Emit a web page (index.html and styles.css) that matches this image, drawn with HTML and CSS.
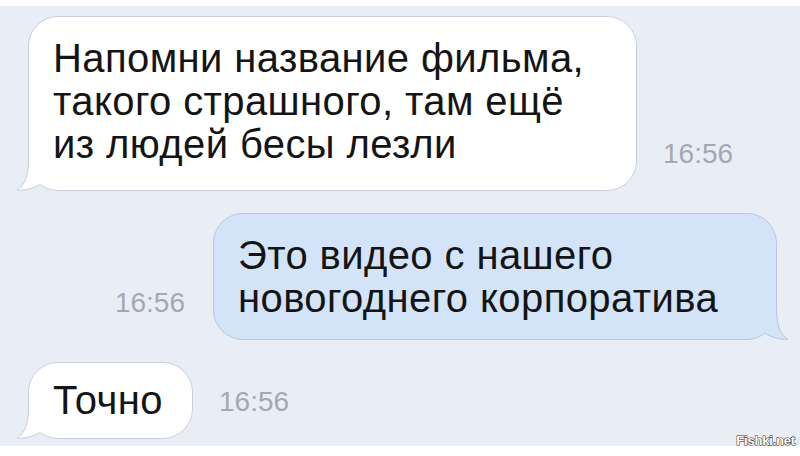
FILE: index.html
```html
<!DOCTYPE html>
<html lang="ru">
<head>
    <meta charset="UTF-8">
    <meta name="viewport" content="width=device-width, initial-scale=1.0">
    <title>Переписка</title>
    <link rel="stylesheet" href="styles.css">
</head>
<body>
    <div class="chat">
        <div class="row">
            <div class="bubble bubble-in bubble-wide">
                Напомни название фильма,<br>такого страшного, там ещё<br>из людей бесы лезли
                <svg class="tail tail-left" width="44" height="35" viewBox="0 0 44 35">
                    <path class="tail-fill" d="M12.5 3 C12.5 20 9 29 1 34.2 C9 34.8 17 32.5 24 28.4 Z"/>
                    <path class="tail-line" d="M12.5 3 C12.5 20 9 29 1 34.2 C9 34.8 17 32.5 24 28.4"/>
                </svg>
            </div>
            <span class="time">16:56</span>
        </div>
        <div class="row row-out">
            <span class="time">16:56</span>
            <div class="bubble bubble-out bubble-mid">
                Это видео с нашего<br>новогоднего корпоратива
                <svg class="tail tail-right" width="44" height="35" viewBox="0 0 44 35">
                    <path class="tail-fill" d="M12.5 3 C12.5 20 9 29 1 34.2 C9 34.8 17 32.5 24 28.4 Z"/>
                    <path class="tail-line" d="M12.5 3 C12.5 20 9 29 1 34.2 C9 34.8 17 32.5 24 28.4"/>
                </svg>
            </div>
        </div>
        <div class="row">
            <div class="bubble bubble-in bubble-short">
                Точно
                <svg class="tail tail-left" width="44" height="35" viewBox="0 0 44 35">
                    <path class="tail-fill" d="M12.5 3 C12.5 20 9 29 1 34.2 C9 34.8 17 32.5 24 28.4 Z"/>
                    <path class="tail-line" d="M12.5 3 C12.5 20 9 29 1 34.2 C9 34.8 17 32.5 24 28.4"/>
                </svg>
            </div>
            <span class="time">16:56</span>
        </div>
        <div class="watermark">Fishki.net</div>
    </div>
</body>
</html>
```

FILE: styles.css
```css
/* Page */
body {
    margin: 0;
    background-color: #ffffff;
    font-family: "Liberation Sans", Arial, sans-serif;
    overflow: hidden;
}
/* Chat area */
.chat {
    position: relative;
    box-sizing: border-box;
    height: 440px;
    margin-top: 6px;
    padding: 10px 23px 0 28px;
    background-color: #e9eef6;
    display: flex;
    flex-direction: column;
    gap: 22px;
}
/* One message with its time */
.row {
    display: flex;
    align-items: flex-end;
    gap: 26px;
}
.row-out {
    justify-content: flex-end;
    gap: 28px;
}
/* Message bubbles */
.bubble {
    position: relative;
    box-sizing: border-box;
    padding: 20px 20px 24px 24px;
    border-radius: 30px;
    font-size: 40px;
    line-height: 43px;
    letter-spacing: 0.4px;
    color: #141414;
}
.bubble-in {
    background-color: #ffffff;
    border: 1px solid #c9d0da;
}
.bubble-out {
    background-color: #d3e4f9;
    border: 1px solid #b8c8dc;
}
.bubble-wide {
    width: 609px;
}
.bubble-mid {
    width: 564px;
    padding-top: 20px;
    padding-bottom: 19px;
}
.bubble-short {
    width: 165px;
    padding-top: 16px;
    padding-bottom: 16px;
}
/* Bubble tails */
.tail {
    position: absolute;
    bottom: -1px;
    overflow: visible;
}
.tail-left {
    left: -13px;
}
.tail-right {
    right: -13px;
    transform: scaleX(-1);
}
.tail-line {
    fill: none;
    stroke-width: 1;
}
.bubble-in .tail-fill {
    fill: #ffffff;
}
.bubble-in .tail-line {
    stroke: #c9d0da;
}
.bubble-out .tail-fill {
    fill: #d3e4f9;
}
.bubble-out .tail-line {
    stroke: #b8c8dc;
}
/* Time stamps */
.time {
    font-size: 28px;
    line-height: 28px;
    margin-bottom: 23px;
    color: #a4a8af;
}
/* Site watermark */
.watermark {
    position: absolute;
    right: 5px;
    bottom: -2px;
    font-size: 13px;
    font-weight: bold;
    color: #ffffff;
    -webkit-text-stroke: 1px #2a2a2a;
    paint-order: stroke fill;
    letter-spacing: -0.2px;
}
```
